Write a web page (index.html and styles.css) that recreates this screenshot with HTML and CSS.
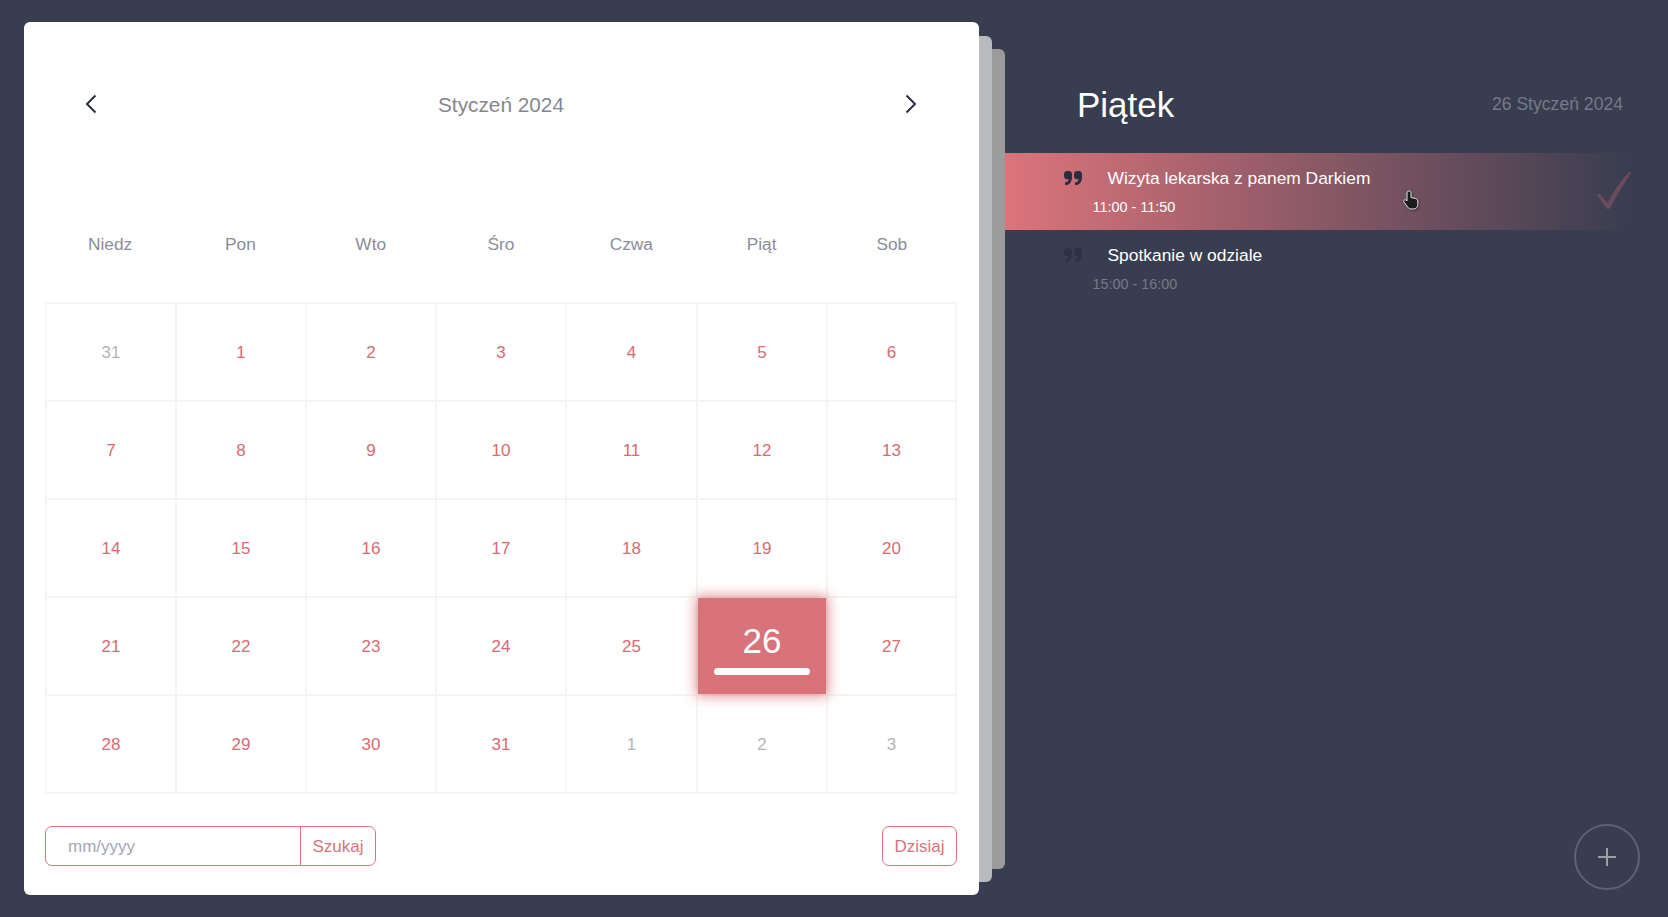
FILE: index.html
```html
<!DOCTYPE html>
<html lang="pl">
<head>
<meta charset="utf-8">
<title>Kalendarz</title>
<link rel="stylesheet" href="styles.css">
</head>
<body>
<main class="app">
  <section class="stack">
    <div class="sheet sheet-far"></div>
    <div class="sheet sheet-near"></div>
    <div class="card">
      <header class="month-bar">
        <svg class="chevron" width="12" height="20" viewBox="0 0 12 20"><path d="M10.5 1.5 2 10l8.5 8.5"/></svg>
        <span class="month-name">Styczeń 2024</span>
        <svg class="chevron" width="12" height="20" viewBox="0 0 12 20"><path d="M1.5 1.5 10 10l-8.5 8.5"/></svg>
      </header>
      <div class="weekdays">
        <span>Niedz</span><span>Pon</span><span>Wto</span><span>Śro</span><span>Czwa</span><span>Piąt</span><span>Sob</span>
      </div>
      <table class="days">
        <tr><td class="out">31</td><td>1</td><td>2</td><td>3</td><td>4</td><td>5</td><td>6</td></tr>
        <tr><td>7</td><td>8</td><td>9</td><td>10</td><td>11</td><td>12</td><td>13</td></tr>
        <tr><td>14</td><td>15</td><td>16</td><td>17</td><td>18</td><td>19</td><td>20</td></tr>
        <tr><td>21</td><td>22</td><td>23</td><td>24</td><td>25</td><td class="today"><div class="today-fill"><span class="today-num">26</span><span class="today-bar"></span></div></td><td>27</td></tr>
        <tr><td>28</td><td>29</td><td>30</td><td>31</td><td class="out">1</td><td class="out">2</td><td class="out">3</td></tr>
      </table>
      <footer class="tools">
        <div class="search">
          <span class="search-input">mm/yyyy</span>
          <span class="search-btn">Szukaj</span>
        </div>
        <span class="today-btn">Dzisiaj</span>
      </footer>
    </div>
  </section>
  <section class="agenda">
    <header class="agenda-head">
      <h1 class="day-name">Piątek</h1>
      <span class="day-date">26 Styczeń 2024</span>
    </header>
    <ul class="events">
      <li class="event active">
        <div class="event-line">
          <svg class="quote" width="18" height="14" viewBox="0 0 18 14"><path d="M3 0h2c2 0 3 1.500 3 3.500v2.500c0 4.500-2.500 8-6 8h-1v-2.500c2.200 0 3.500-1.500 3.500-3.200h-1.500c-1.700 0-3-1.300-3-3.300v-1.700c0-2 1.300-3.300 3-3.300zm10 0h2c2 0 3 1.500 3 3.500v2.500c0 4.500-2.500 8-6 8h-1v-2.500c2.200 0 3.500-1.500 3.500-3.200h-1.500c-1.700 0-3-1.300-3-3.300v-1.700c0-2 1.300-3.300 3-3.300z"/></svg>
          <span class="event-title">Wizyta lekarska z panem Darkiem</span>
        </div>
        <div class="event-time">11:00 - 11:50</div>
        <svg class="check" width="36" height="40" viewBox="0 0 36 40"><path d="M1 24Q2 21.500 4 23L11.500 32Q20 15 33 1Q35 0 35 2Q24 18 14 37Q12 39 10 37Z"/></svg>
      </li>
      <li class="event">
        <div class="event-line">
          <svg class="quote" width="18" height="14" viewBox="0 0 18 14"><path d="M3 0h2c2 0 3 1.500 3 3.500v2.500c0 4.500-2.500 8-6 8h-1v-2.500c2.200 0 3.500-1.500 3.500-3.200h-1.500c-1.700 0-3-1.300-3-3.300v-1.700c0-2 1.300-3.300 3-3.300zm10 0h2c2 0 3 1.500 3 3.500v2.500c0 4.500-2.500 8-6 8h-1v-2.500c2.200 0 3.500-1.500 3.500-3.200h-1.500c-1.700 0-3-1.300-3-3.300v-1.700c0-2 1.300-3.300 3-3.300z"/></svg>
          <span class="event-title">Spotkanie w odziale</span>
        </div>
        <div class="event-time">15:00 - 16:00</div>
      </li>
    </ul>
    <button class="add" type="button" aria-label="Dodaj">
      <svg width="18" height="18" viewBox="0 0 18 18"><path d="M9 0v18M0 9h18"/></svg>
    </button>
  </section>
  <svg class="pointer" width="17" height="21" viewBox="0 0 17 21"><path d="M7 1C8.200 1 9 1.800 9 3V7.500L13.500 8.500C15 8.900 15.800 9.800 15.800 11V14.500C15.800 17.300 14 19 11.500 19H9C7.600 19 6.600 18.300 5.800 17.200L2 12.200C1.400 11.400 1.600 10.400 2.400 10C3.200 9.600 4.100 10 4.700 10.700L5 11V3C5 1.800 5.800 1 7 1Z"/></svg>
</main>
</body>
</html>
```
FILE: styles.css
```css
* { box-sizing: border-box; }
html, body { margin: 0; height: 100%; }
body {
  background: #393d50;
  font-family: "Liberation Sans", Arial, sans-serif;
  overflow: hidden;
}
.app {
  position: relative;
  display: flex;
  width: 1668px;
  height: 917px;
}
.stack {
  position: relative;
  flex: 0 0 1005px;
  padding: 22px 26px 22px 24px;
}
.sheet {
  position: absolute;
  left: 24px;
  border-radius: 6px;
}
.sheet-far { top: 49px; bottom: 48px; right: 0; background: #9b9b9b; }
.sheet-near { top: 36px; bottom: 35px; right: 13px; background: #b9babe; }
.card {
  position: relative;
  height: 873px;
  padding: 0 22px 0 21px;
  background: #fff;
  border-radius: 6px;
}
.month-bar {
  display: flex;
  align-items: center;
  justify-content: space-between;
  height: 166px;
  padding: 0 40px;
}
.month-name { font-size: 20.8px; color: #85878f; }
.chevron { margin-top: -2px; fill: none; stroke: #2b2e3d; stroke-width: 2; }
.weekdays {
  display: grid;
  grid-template-columns: repeat(7, 1fr);
  align-items: center;
  height: 114px;
  padding-bottom: 2px;
  font-size: 17.3px;
  text-align: center;
  color: #8a8d9b;
}
.days {
  width: 912px;
  height: 490px;
  table-layout: fixed;
  border-collapse: collapse;
}
.days td {
  width: 130px;
  height: 98px;
  padding: 2px 0 0;
  border: 2px solid #f5f5f5;
  font-size: 17px;
  text-align: center;
  vertical-align: middle;
  color: #d96a72;
}
.days td:nth-child(5) { width: 131px; }
.days td:nth-child(7) { width: 129px; }
.days td.out { color: #b4b4b6; }
.days td.today {
  position: relative;
  color: #fff;
}
.today-fill {
  position: absolute;
  inset: 0;
  padding-top: 23px;
  background: #d9737a;
  box-shadow: 0 0 12px 2px rgba(217, 115, 122, 0.8);
}
.today-num {
  display: block;
  margin-bottom: 7px;
  font-size: 35px;
  line-height: 40px;
}
.today-bar {
  display: block;
  width: 96px;
  height: 7px;
  margin: 0 auto;
  border-radius: 4px;
  background: #fff;
}
.tools {
  display: flex;
  justify-content: space-between;
  padding-top: 32px;
  font-size: 17px;
}
.search {
  display: flex;
  width: 331px;
  height: 40px;
  border: 1px solid #d9737a;
  border-radius: 7px;
}
.search-input {
  flex: 1;
  padding: 1px 0 0 22px;
  line-height: 38px;
  color: #a4a7b4;
}
.search-btn {
  flex: 0 0 75px;
  padding-top: 1px;
  border-left: 1px solid #d9737a;
  line-height: 38px;
  text-align: center;
  color: #d9737a;
}
.today-btn {
  width: 75px;
  height: 40px;
  padding-top: 1px;
  border: 1px solid #d9737a;
  border-radius: 7px;
  line-height: 37px;
  text-align: center;
  color: #d9737a;
}
.agenda {
  position: relative;
  flex: 1;
}
.agenda-head {
  display: flex;
  align-items: center;
  justify-content: space-between;
  height: 153px;
  padding: 56px 45px 0 72px;
}
.day-name {
  margin: 0;
  font-size: 35px;
  font-weight: 400;
  color: #fff;
}
.day-date { font-size: 17.6px; color: #767989; }
.events {
  margin: 0;
  padding: 0;
  list-style: none;
}
.event {
  position: relative;
  height: 77px;
  padding: 15px 0 0 58px;
  color: #fff;
}
.event.active {
  width: 625px;
  background: linear-gradient(to right, #dc747b 0%, rgba(57, 61, 80, 0) 100%);
}
.event-line {
  display: flex;
  align-items: center;
  height: 20px;
  font-size: 17.4px;
}
.quote { fill: #2a2d40; margin: 0 25.5px 0 1px; opacity: 0.7; }
.active .quote { opacity: 1; }
.event-time {
  margin-top: 11px;
  padding-left: 29.5px;
  font-size: 14.4px;
  color: #767989;
}
.active .event-time { color: #fff; }
.check {
  position: absolute;
  top: 18px;
  right: -2px;
  fill: #6b4b5b;
}
.add {
  position: absolute;
  top: 824px;
  left: 569px;
  width: 66px;
  height: 66px;
  display: flex;
  align-items: center;
  justify-content: center;
  padding: 0 1px 1px 0;
  background: none;
  border: 2px solid #5e6273;
  border-radius: 50%;
}
.add svg { fill: none; stroke: #9c9ea8; stroke-width: 2; }
.pointer {
  position: absolute;
  left: 1402px;
  top: 190px;
  fill: #1c1c1c;
  stroke: #e8e8e8;
  stroke-width: 1;
  filter: drop-shadow(1px 1px 1px rgba(0,0,0,.4));
}
```
